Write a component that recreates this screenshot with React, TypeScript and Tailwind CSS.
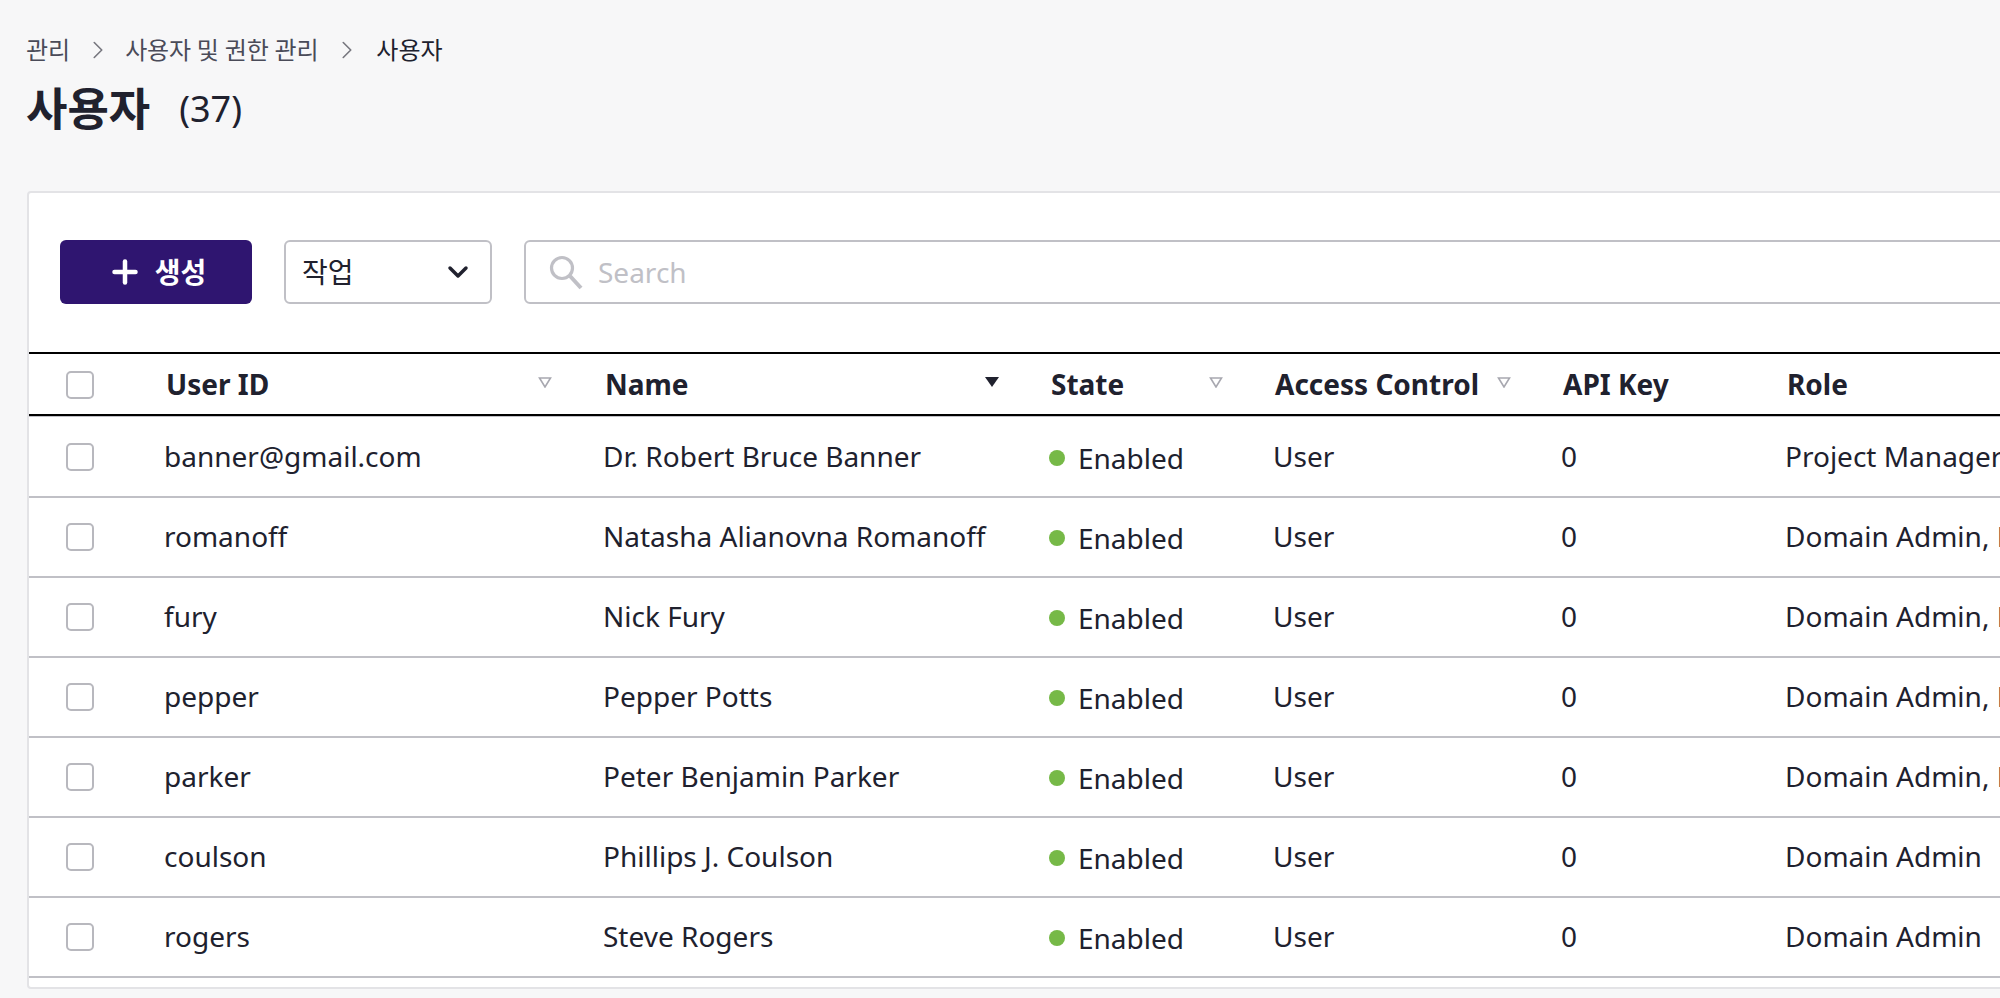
import { ChevronDown, ChevronRight, Plus } from 'lucide-react';

interface User {
  id: string;
  name: string;
  role: string;
}

const users: User[] = [
  { id: 'banner@gmail.com', name: 'Dr. Robert Bruce Banner', role: 'Project Manager' },
  { id: 'romanoff', name: 'Natasha Alianovna Romanoff', role: 'Domain Admin, Project Manager' },
  { id: 'fury', name: 'Nick Fury', role: 'Domain Admin, Project Manager' },
  { id: 'pepper', name: 'Pepper Potts', role: 'Domain Admin, Project Manager' },
  { id: 'parker', name: 'Peter Benjamin Parker', role: 'Domain Admin, Project Manager' },
  { id: 'coulson', name: 'Phillips J. Coulson', role: 'Domain Admin' },
  { id: 'rogers', name: 'Steve Rogers', role: 'Domain Admin' },
];

function SortIcon({ active = false }: { active?: boolean }) {
  if (active) {
    return (
      <svg className="w-[14px] h-[10px]" viewBox="0 0 14 10">
        <path d="M0 0h14L7 10z" fill="#20212e" />
      </svg>
    );
  }
  return (
    <svg className="w-[14px] h-[11px]" viewBox="0 0 14 11">
      <path d="M1.5 1h11L7 10z" fill="none" stroke="#a8a8b0" strokeWidth="1.6" />
    </svg>
  );
}

function Checkbox() {
  return <div className="w-[28px] h-[28px] rounded-[5px] border-2 border-[#b8b8be] bg-white" />;
}

export default function App() {
  return (
    <div
      className="w-[2000px] h-[998px] overflow-hidden bg-[#f7f7f8] text-[#20212e]"
      style={{ fontFamily: '"Noto Sans", "Noto Sans CJK KR", sans-serif' }}
    >
      <div className="w-[2400px] pl-[26px]">
        {/* Breadcrumb */}
        <div className="flex items-center h-[32px] mt-[34px] text-[24px] leading-[32px]">
          <span className="text-[#4a4b58]">관리</span>
          <ChevronRight className="w-[30px] h-[30px] ml-[13px] mr-[12px] text-[#77777f]" strokeWidth={1.3} />
          <span className="text-[#4a4b58] tracking-[-0.2px]">사용자 및 권한 관리</span>
          <ChevronRight className="w-[30px] h-[30px] mx-[14px] text-[#77777f]" strokeWidth={1.3} />
          <span>사용자</span>
        </div>

        {/* Title */}
        <div className="flex items-center h-[60px] mt-[13px] mb-[52px]">
          <h1 className="text-[45px] font-bold leading-[60px]">사용자</h1>
          <span className="ml-[29px] text-[36px] leading-[60px]">(37)</span>
        </div>

        {/* Card */}
        <div className="ml-[1px] border-2 border-[#e3e3e6] rounded-[4px] bg-white pb-[9px]">
          <div className="flex gap-[32px] pt-[47px] pb-[48px] pl-[31px] pr-[40px]">
            <button className="flex items-center justify-center gap-[12px] w-[192px] h-[64px] pl-[1px] rounded-[6px] bg-[#2f1570] text-white text-[28px] font-bold">
              <Plus className="w-[36px] h-[36px]" strokeWidth={3} />
              <span>생성</span>
            </button>
            <div className="flex items-center justify-between w-[208px] h-[64px] rounded-[6px] border-2 border-[#c0c0c6] pl-[16px] pr-[16px] text-[28px]">
              <span>작업</span>
              <ChevronDown className="w-[32px] h-[32px]" strokeWidth={2.6} />
            </div>
            <div className="flex-1 flex items-center gap-[14px] h-[64px] rounded-[6px] border-2 border-[#c0c0c6] pl-[22px] text-[28px] text-[#c0c0c6]">
              <svg className="w-[36px] h-[36px] shrink-0" viewBox="0 0 36 36" fill="none" stroke="currentColor">
                <circle cx="14" cy="14" r="10.5" strokeWidth="3.2" />
                <path d="M22 22l11 12" strokeWidth="4" />
              </svg>
              <span>Search</span>
            </div>
          </div>

          {/* Table */}
          <table className="w-full table-fixed border-collapse text-[28px]">
            <colgroup>
              <col className="w-[135px]" />
              <col className="w-[439px]" />
              <col className="w-[446px]" />
              <col className="w-[224px]" />
              <col className="w-[288px]" />
              <col className="w-[224px]" />
              <col />
            </colgroup>
            <thead>
              <tr className="h-[62px] border-t-2 border-t-black border-b-2 border-b-black">
                <th className="pl-[37px] pt-[2px]">
                  <Checkbox />
                </th>
                <th className="pl-[2px] text-left font-bold">
                  <div className="flex items-center justify-between pr-[51px]">
                    <span>User ID</span>
                    <span className="-mt-[4px]"><SortIcon /></span>
                  </div>
                </th>
                <th className="pl-[2px] text-left font-bold">
                  <div className="flex items-center justify-between pr-[50px]">
                    <span>Name</span>
                    <span className="-mt-[4px]"><SortIcon active /></span>
                  </div>
                </th>
                <th className="pl-[2px] text-left font-bold">
                  <div className="flex items-center justify-between pr-[50px]">
                    <span>State</span>
                    <span className="-mt-[4px]"><SortIcon /></span>
                  </div>
                </th>
                <th className="pl-[2px] text-left font-bold">
                  <div className="flex items-center gap-[18px]">
                    <span>Access Control</span>
                    <span className="-mt-[4px]"><SortIcon /></span>
                  </div>
                </th>
                <th className="pl-[2px] text-left font-bold">API Key</th>
                <th className="pl-[2px] text-left font-bold">Role</th>
              </tr>
              <tr className="h-[2px] bg-[#c0c0c6]">
                <td colSpan={7} className="p-0" />
              </tr>
            </thead>
            <tbody>
              {users.map((user) => (
                <tr key={user.id} className="h-[80px] border-b-2 border-[#c0c0c6]">
                  <td className="pl-[37px]">
                    <Checkbox />
                  </td>
                  <td className="pb-[2px]">{user.id}</td>
                  <td className="pb-[2px]">{user.name}</td>
                  <td>
                    <div className="flex items-center gap-[13px] pt-[2px]">
                      <span className="w-[16px] h-[16px] rounded-full bg-[#76b947]" />
                      <span>Enabled</span>
                    </div>
                  </td>
                  <td className="pb-[2px]">User</td>
                  <td className="pb-[2px]">0</td>
                  <td className="pb-[2px] whitespace-nowrap">{user.role}</td>
                </tr>
              ))}
            </tbody>
          </table>
        </div>
      </div>
    </div>
  );
}
